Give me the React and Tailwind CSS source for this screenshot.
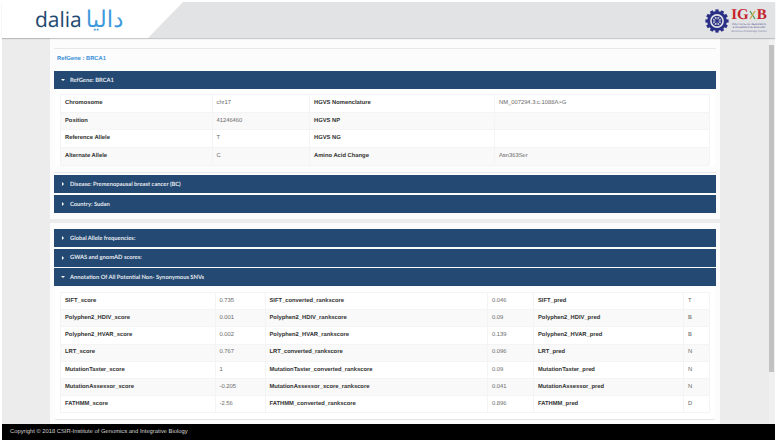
const table1 = [
  ["Chromosome", "chr17", "HGVS Nomenclature", "NM_007294.3:c.1088A>G"],
  ["Position", "41246460", "HGVS NP", ""],
  ["Reference Allele", "T", "HGVS NG", ""],
  ["Alternate Allele", "C", "Amino Acid Change", "Asn363Ser"],
];

const table2 = [
  ["SIFT_score", "0.735", "SIFT_converted_rankscore", "0.046", "SIFT_pred", "T"],
  ["Polyphen2_HDIV_score", "0.001", "Polyphen2_HDIV_rankscore", "0.09", "Polyphen2_HDIV_pred", "B"],
  ["Polyphen2_HVAR_score", "0.002", "Polyphen2_HVAR_rankscore", "0.139", "Polyphen2_HVAR_pred", "B"],
  ["LRT_score", "0.767", "LRT_converted_rankscore", "0.096", "LRT_pred", "N"],
  ["MutationTaster_score", "1", "MutationTaster_converted_rankscore", "0.09", "MutationTaster_pred", "N"],
  ["MutationAssessor_score", "-0.205", "MutationAssessor_score_rankscore", "0.041", "MutationAssessor_pred", "N"],
  ["FATHMM_score", "-2.56", "FATHMM_converted_rankscore", "0.896", "FATHMM_pred", "D"],
];

function Bar({ title, open, className = "" }) {
  return (
    <div className={`flex h-[18px] items-center bg-[#244a73] pl-[7px] font-['Lato',sans-serif] text-[5.8px] font-bold text-[#e4e9ef] ${className}`}>
      <svg width="4" height="4" viewBox="0 0 4 4" className="mr-[5px]">
        {open ? <path d="M0 1h4L2 3z" fill="#fff" /> : <path d="M1 0l2 2-2 2z" fill="#fff" />}
      </svg>
      <span className="translate-y-[0.5px]">{title}</span>
    </div>
  );
}

function DataTable({ rows, widths, rowClass }) {
  return (
    <table className="w-full table-fixed border-collapse border border-[#eeeeee] font-['Liberation_Sans',sans-serif] text-[5.8px]">
      <colgroup>
        {widths.map((w, i) => (
          <col key={i} style={{ width: w }} />
        ))}
      </colgroup>
      <tbody>
        {rows.map((row, i) => (
          <tr key={i} className={`${rowClass} ${i % 2 ? "bg-[#f9f9f9]" : "bg-white"}`}>
            {row.map((cell, j) => (
              <td
                key={j}
                className={`border border-[#f4f4f4] py-0 pl-[4px] whitespace-nowrap ${j % 2 ? "text-[#666]" : "font-bold text-[#333]"}`}
              >
                {cell}
              </td>
            ))}
          </tr>
        ))}
      </tbody>
    </table>
  );
}

function Emblem() {
  const teeth = Array.from({ length: 12 }, (_, i) => i * 30);
  return (
    <svg width="24" height="24" viewBox="0 0 24 24">
      {teeth.map((a) => (
        <rect key={a} x="10.4" y="0.4" width="3.2" height="4" fill="#2a2f86" transform={`rotate(${a} 12 12)`} />
      ))}
      <circle cx="12" cy="12" r="8.4" fill="none" stroke="#2a2f86" strokeWidth="3" />
      <circle cx="12" cy="12" r="4.6" fill="none" stroke="#2a2f86" strokeWidth="1.4" />
      <path d="M12 7v10M7.5 12h9M8.8 8.8l6.4 6.4M15.2 8.8l-6.4 6.4" stroke="#2a2f86" strokeWidth="1.1" />
    </svg>
  );
}

function Logo() {
  return (
    <div className="flex items-center gap-[2px]">
      <Emblem />
      <div className="flex w-[36px] flex-col items-center">
        <div className="flex items-center font-['Liberation_Serif',serif] text-[15px] leading-[12px] font-bold text-[#c5252c]">
          <span>IG</span>
          <svg width="7" height="10" viewBox="0 0 7 10" className="mx-[0.5px]">
            <path d="M1 1l5 8" stroke="#4a9a55" strokeWidth="1.3" />
            <path d="M6 1L1 9" stroke="#c9a23c" strokeWidth="1.3" />
          </svg>
          <span>B</span>
        </div>
        <div className="mt-[2px] text-center font-['Liberation_Sans',sans-serif] text-[2.7px] leading-[3.2px] whitespace-nowrap text-[#4b4f8f]">
          <div>INSTITUTE OF GENOMICS</div>
          <div>&amp; INTEGRATIVE BIOLOGY</div>
          <div className="mt-[0.5px] text-[#7a7ea8]">Genomics Knowledge Partner</div>
        </div>
      </div>
    </div>
  );
}

export default function App() {
  return (
    <div className="h-[442px] w-[777px] overflow-hidden bg-white p-[2px] [text-rendering:geometricPrecision]">
      <div className="flex h-[438px] flex-col bg-[#ececec]">
        <header className="relative h-[36px] shrink-0 bg-[#e2e3e5] shadow-[0_1px_1px_rgba(0,0,0,0.2)]">
          <div className="flex h-full items-center bg-white pl-[33px] [clip-path:polygon(0_0,181px_0,146px_100%,0_100%)]">
            <span className="font-['Open_Sans',sans-serif] text-[21px] leading-none font-medium text-[#21486f]">dalia</span>
            <span dir="rtl" className="ml-[4px] font-['DejaVu_Sans',sans-serif] text-[23px] leading-none text-[#3f9bdc]">
              داليا
            </span>
          </div>
          <div className="absolute top-[7px] right-[8px]">
            <Logo />
          </div>
        </header>

        <div className="flex min-h-0 flex-1">
          <main className="ml-[48px] flex w-[670px] flex-col gap-[4px] overflow-hidden">
            <section className="h-[181px] shrink-0 bg-[#fcfcfc] px-[4px] pt-[10px]">
              <div className="h-[125px] border-t border-b border-[#e8e8e8]">
                <p className="h-[22px] pt-[6px] pl-[3px] font-['Liberation_Sans',sans-serif] text-[5.8px] leading-[8px] font-bold text-[#3b90d8]">
                  RefGene : BRCA1
                </p>
                <Bar title="RefGene: BRCA1" open className="w-[662px]" />
                <div className="mx-[1px] bg-white pt-[5px] pr-[6px] pl-[5px]">
                  <DataTable rows={table1} widths={["151.5px", "97.5px", "185px", "215px"]} rowClass="h-[17.7px]" />
                </div>
              </div>
              <Bar title="Disease: Premenopausal breast cancer (BC)" className="mt-[2px] w-[662px]" />
              <Bar title="Country: Sudan" className="mt-[2px] w-[662px]" />
            </section>

            <section className="flex-1 bg-[#fcfcfc] px-[4px] pt-[6px]">
              <Bar title="Global Allele frequencies:" className="w-[662px]" />
              <Bar title="GWAS and gnomAD scores:" className="mt-[1.5px] w-[662px]" />
              <Bar title="Annotation Of All Potential Non- Synonymous SNVs" open className="mt-[1.5px] w-[662px]" />
              <div className="mx-[1px] h-[134px] rounded-b-[2px] border-b border-[#e4e4e4] bg-white pt-[6px] pr-[6px] pl-[5px]">
                <DataTable
                  rows={table2}
                  widths={["154.5px", "50px", "222.5px", "46px", "150px", "26px"]}
                  rowClass="h-[17.2px]"
                />
              </div>
            </section>
          </main>

          <div className="ml-auto w-[6px] bg-[#f0f0f0] pt-[7px]">
            <div className="h-[327px] w-[5px] bg-[#c1c1c1]" />
          </div>
        </div>

        <footer className="flex h-[16px] shrink-0 items-center bg-black pl-[8px] font-['Liberation_Sans',sans-serif] text-[5.8px] text-[#d5d5d5]">
          Copyright © 2018 CSIR-Institute of Genomics and Integrative Biology
        </footer>
      </div>
    </div>
  );
}
